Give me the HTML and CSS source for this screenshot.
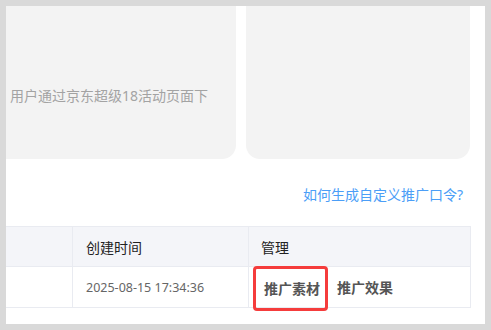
FILE: index.html
```html
<!DOCTYPE html>
<html lang="zh">
<head>
<meta charset="utf-8">
<link rel="stylesheet" href="styles.css">
</head>
<body>
<div class="panel">
  <div class="cards">
    <div class="card card-a"><span class="card-text">用户通过京东超级18活动页面下</span></div>
    <div class="card card-b"></div>
  </div>
  <div class="link-row"><a class="help-link">如何生成自定义推广口令?</a></div>
  <div class="table">
    <div class="row head">
      <div class="cell c1"></div>
      <div class="cell c2">创建时间</div>
      <div class="cell c3">管理</div>
    </div>
    <div class="row body">
      <div class="cell c1"></div>
      <div class="cell c2 date">2025-08-15 17:34:36</div>
      <div class="cell c3 actions">
        <span class="act highlighted">推广素材</span>
        <span class="act">推广效果</span>
      </div>
    </div>
  </div>
</div>
</body>
</html>
```

FILE: styles.css
```css
html, body {
  margin: 0;
  padding: 0;
}
body {
  background: #d9d9d9;
  width: 491px;
  height: 330px;
  overflow: hidden;
  font-family: "Noto Sans", "Noto Sans CJK SC", sans-serif;
}
.panel {
  margin: 6px 6px 0 6px;
  width: 479px;
  height: 318px;
  background: #fff;
  overflow: hidden;
}
.cards {
  display: flex;
  gap: 10px;
  height: 153px;
}
.card {
  background: #f3f3f3;
  border-radius: 0 0 14px 14px;
}
.card-a {
  width: 230px;
  border-bottom-left-radius: 0;
  display: flex;
  align-items: center;
  padding-top: 25px;
  box-sizing: border-box;
}
.card-b {
  width: 224px;
}
.card-text {
  padding-left: 4px;
  font-size: 14px;
  color: #a3a3a3;
  white-space: nowrap;
}
.link-row {
  height: 67px;
  display: flex;
  justify-content: flex-end;
  align-items: center;
  width: 457px;
  padding-top: 3px;
  box-sizing: border-box;
}
.help-link {
  color: #4b9ef7;
  font-size: 14px;
}
.table {
  width: 464px;
  border-top: 1px solid #e9ebf1;
  border-right: 1px solid #e9ebf1;
}
.row {
  display: flex;
  height: 40px;
  border-bottom: 1px solid #e9ebf1;
}
.row.head {
  background: #f4f5f9;
  height: 39px;
}
.cell {
  display: flex;
  align-items: center;
  box-sizing: border-box;
}
.c1 { width: 67px; border-right: 1px solid #e9ebf1; }
.c2 { width: 176px; border-right: 1px solid #e9ebf1; padding-left: 13px; }
.c3 { flex: 1; padding-left: 12px; }
.head .cell { font-size: 14px; color: #222; }
.date { font-size: 12.5px; color: #666; }
.actions { gap: 9px; padding-left: 4px; }
.act {
  font-size: 14px;
  font-weight: 600;
  color: #555;
}
.highlighted {
  border: 3px solid #f53c3c;
  border-radius: 4px;
  padding: 9px 5px 10px 8px;
  margin-top: 2px;
}
```
